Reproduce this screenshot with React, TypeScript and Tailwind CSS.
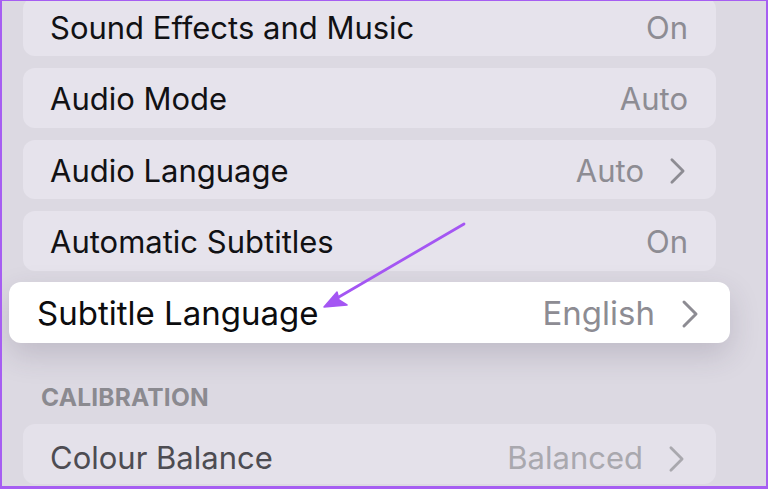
import React from 'react';

type Row = { label: string; value: string; chevron?: boolean };

const rows: Row[] = [
  { label: 'Sound Effects and Music', value: 'On' },
  { label: 'Audio Mode', value: 'Auto' },
  { label: 'Audio Language', value: 'Auto', chevron: true },
  { label: 'Automatic Subtitles', value: 'On' },
];

const Chevron = ({ className }: { className?: string }) => (
  <svg viewBox="0 0 18 30" className={className} fill="none">
    <polyline points="3,3 15,15 3,27" stroke="currentColor" strokeWidth="3" strokeLinecap="round" strokeLinejoin="round" />
  </svg>
);

const SettingRow = ({ label, value, chevron }: Row) => (
  <div className="flex h-[59.5px] items-center justify-between rounded-[12px] bg-[#e6e3ec] pl-[27px] pr-[28px] pt-[3px]">
    <span className="text-[31px] text-[#111114]">{label}</span>
    <div className="flex items-center gap-[25px] text-[#8d8c93]">
      <span className="text-[31px]">{value}</span>
      {chevron && <Chevron className="mr-[2px] h-[28px] w-[17px]" />}
    </div>
  </div>
);

export default function App() {
  return (
    <div
      className="relative h-[489px] w-[768px] overflow-hidden border-2 border-t border-b-[3px] border-[#a65ef2] bg-[#dcd9e2]"
      style={{ fontFamily: 'Inter, "Liberation Sans", sans-serif' }}
    >
      <div className="mt-[-4.5px] flex flex-col gap-[12px] pl-[21px] pr-[50px]">
        {rows.map((r) => (
          <SettingRow key={r.label} {...r} />
        ))}

        <div className="mx-[-14px] mt-[-1px] flex h-[61px] items-center justify-between rounded-[12px] bg-white pl-[28px] pr-[31px] pt-[3px] shadow-[0_12px_30px_rgba(60,50,80,0.18)]">
          <span className="text-[33px] text-[#0c0c0e]">Subtitle Language</span>
          <div className="flex items-center gap-[26px] text-[#8d8c93]">
            <span className="text-[33px]">English</span>
            <Chevron className="h-[30px] w-[18px]" />
          </div>
        </div>

        <div className="mt-[24px] pl-[18px] text-[24.5px] font-bold tracking-[0.2px] text-[#8b8a90]">CALIBRATION</div>

        <div className="mt-[-3px] flex h-[60px] items-start justify-between rounded-[12px] bg-[#e4e1ea] pl-[27px] pr-[31px] pt-[11px]">
          <span className="text-[31px] text-[#4d4c52]">Colour Balance</span>
          <div className="flex items-center gap-[25px] text-[#a9a8ae]">
            <span className="text-[31px]">Balanced</span>
            <Chevron className="h-[28px] w-[17px]" />
          </div>
        </div>
      </div>

      <svg className="pointer-events-none absolute left-0 top-0" width="768" height="489" viewBox="0 0 768 489">
        <line x1="462" y1="223" x2="330" y2="300" stroke="#a456f3" strokeWidth="2.8" strokeLinecap="round" />
        <path d="M322 306 L335 291 L337 299 L345 304 Z" fill="#a456f3" stroke="#a456f3" strokeWidth="1.5" strokeLinejoin="round" />
      </svg>
    </div>
  );
}
